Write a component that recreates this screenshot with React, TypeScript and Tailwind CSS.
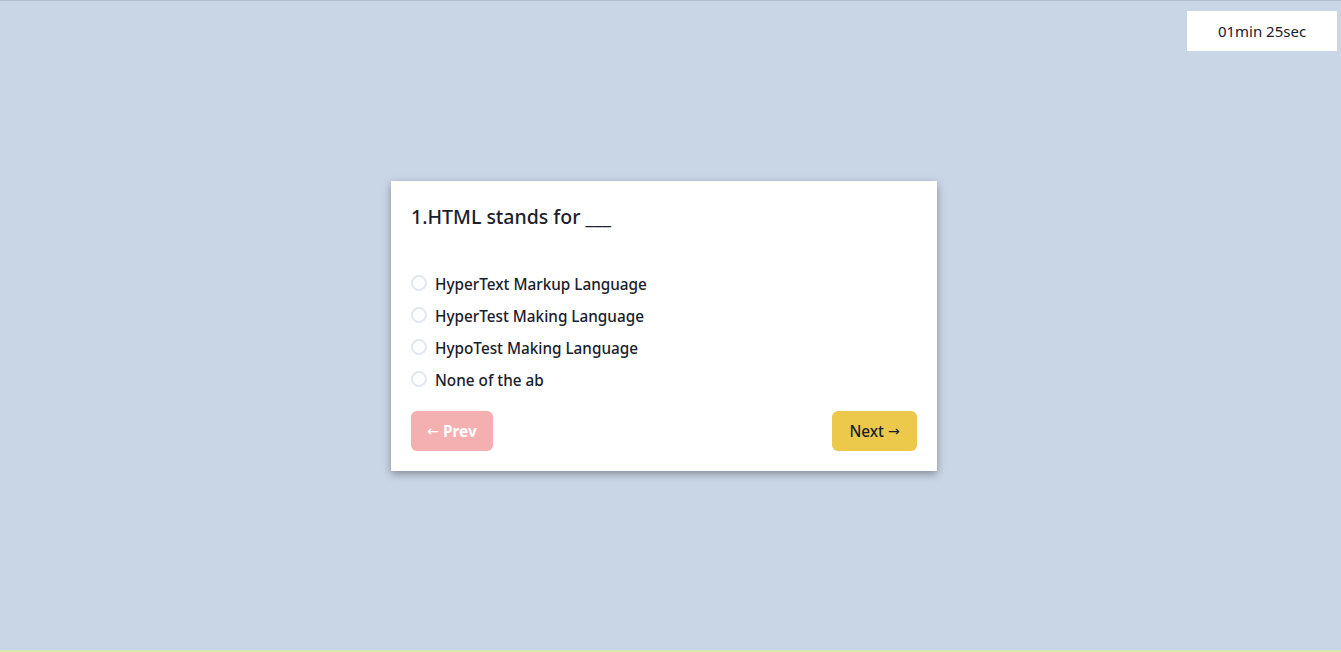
import React from "react";

const options = [
  "HyperText Markup Language",
  "HyperTest Making Language",
  "HypoTest Making Language",
  "None of the ab",
];

const Arrow = ({ c }: { c: string }) => (
  <span style={{ fontFamily: '"DejaVu Sans", sans-serif' }} className="text-[14px] font-normal">
    {c}
  </span>
);

export default function App() {
  return (
    <div
      className="relative h-[652px] w-full bg-[#c9d6e6] border-t border-[#aebdd0] border-b-2 border-b-[#d8e6b8] flex items-center justify-center overflow-hidden"
      style={{ fontFamily: '"Noto Sans", "Open Sans", sans-serif' }}
    >
      <div className="absolute top-[10px] right-[4px] w-[150px] h-[40px] bg-white flex items-center justify-center text-[15px] text-[#1a202c] pt-px">
        01min 25sec
      </div>
      <div className="w-[546px] bg-white px-5 pt-[21px] pb-5 mr-[13px] shadow-[0_3px_8px_rgba(0,0,0,0.35)]">
        <h2 className="text-[19.5px] leading-[30px] font-medium text-[#1a202c]">1.HTML stands for ___</h2>
        <div className="mt-[36px] flex flex-col">
          {options.map((o) => (
            <label key={o} className="h-[32px] flex items-center gap-2 text-[15.3px] font-medium text-[#1a202c]">
              <span className="w-4 h-4 rounded-full border-2 border-[#e2e8f0] bg-white -mt-px" />
              <span className="leading-[32px]">{o}</span>
            </label>
          ))}
        </div>
        <div className="mt-[15px] flex justify-between">
          <button className="h-10 w-[82px] rounded-md bg-[#f4b0b0] text-white font-bold text-[15.3px] pt-px flex items-center justify-center gap-1">
            <Arrow c="←" />
            <span>Prev</span>
          </button>
          <button className="h-10 w-[85px] rounded-md bg-[#ecc94b] text-[#1a202c] font-medium text-[15.3px] pt-px flex items-center justify-center gap-1">
            <span>Next</span>
            <Arrow c="→" />
          </button>
        </div>
      </div>
    </div>
  );
}
